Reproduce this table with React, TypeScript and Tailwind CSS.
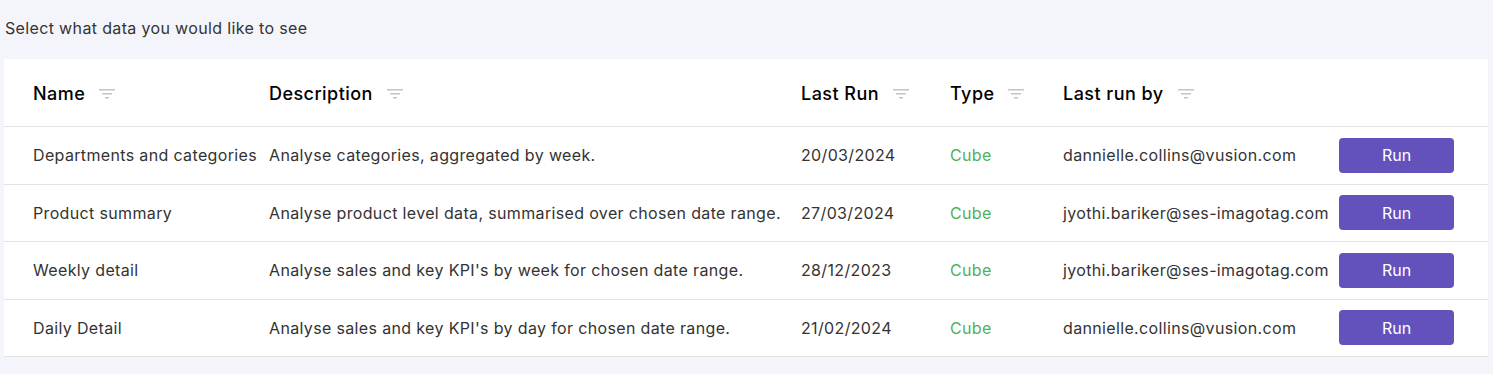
import React from 'react';

type Report = {
  name: string;
  description: string;
  lastRun: string;
  type: string;
  lastRunBy: string;
};

const reports: Report[] = [
  {
    name: 'Departments and categories',
    description: 'Analyse categories, aggregated by week.',
    lastRun: '20/03/2024',
    type: 'Cube',
    lastRunBy: 'dannielle.collins@vusion.com',
  },
  {
    name: 'Product summary',
    description: 'Analyse product level data, summarised over chosen date range.',
    lastRun: '27/03/2024',
    type: 'Cube',
    lastRunBy: 'jyothi.bariker@ses-imagotag.com',
  },
  {
    name: 'Weekly detail',
    description: "Analyse sales and key KPI's by week for chosen date range.",
    lastRun: '28/12/2023',
    type: 'Cube',
    lastRunBy: 'jyothi.bariker@ses-imagotag.com',
  },
  {
    name: 'Daily Detail',
    description: "Analyse sales and key KPI's by day for chosen date range.",
    lastRun: '21/02/2024',
    type: 'Cube',
    lastRunBy: 'dannielle.collins@vusion.com',
  },
];

// shared column template so header and rows line up
const cols = 'grid grid-cols-[236px_532px_149px_113px_276px_115px] items-center pl-[29px]';

function FilterIcon() {
  return (
    <svg className="ml-[14px] h-[12px] w-[16px]" viewBox="0 0 16 12" fill="#c4c4c4">
      <rect x="0" y="1" width="16" height="1.5" />
      <rect x="3" y="5" width="10" height="1.5" />
      <rect x="6" y="9" width="4" height="1.5" />
    </svg>
  );
}

function HeaderCell({ label }: { label: string }) {
  return (
    <div className="flex items-center">
      <span>{label}</span>
      <FilterIcon />
    </div>
  );
}

export default function App() {
  return (
    <div className="min-h-screen bg-[#f4f5fa] px-[4px] pt-[17px] font-['Inter',sans-serif] tracking-[0.35px]">
      <p className="pl-[1px] text-[16px] leading-[22px] text-[#333]">Select what data you would like to see</p>

      {/* Table card */}
      <div className="mt-[20px] w-[1484px] bg-white">
        {/* Header */}
        <div className={`${cols} h-[68px] border-b border-[#e2e2e2] pt-[2px] text-[18px] font-medium tracking-[0.45px] text-black`}>
          <HeaderCell label="Name" />
          <HeaderCell label="Description" />
          <HeaderCell label="Last Run" />
          <HeaderCell label="Type" />
          <HeaderCell label="Last run by" />
          <div />
        </div>

        {/* Rows */}
        {reports.map((r) => (
          <div
            key={r.name}
            className={`${cols} h-[57.5px] border-b border-[#e2e2e2] text-[16px] text-[#333]`}
          >
            <div className="whitespace-nowrap">{r.name}</div>
            <div className="whitespace-nowrap">{r.description}</div>
            <div>{r.lastRun}</div>
            <div className="text-[#52b05a]">{r.type}</div>
            <div className="whitespace-nowrap">{r.lastRunBy}</div>
            <button className="h-[35px] w-[115px] rounded-[4px] bg-[#6352bb] text-[16px] tracking-normal text-white">
              Run
            </button>
          </div>
        ))}
      </div>
    </div>
  );
}
